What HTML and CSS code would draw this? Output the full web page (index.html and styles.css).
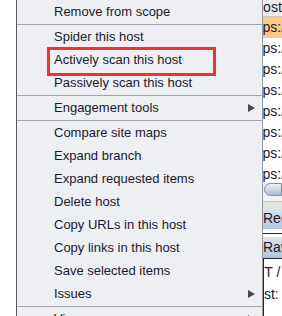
FILE: index.html
```html
<!DOCTYPE html>
<html lang="en">
<head>
    <meta charset="UTF-8">
    <meta name="viewport" content="width=device-width, initial-scale=1.0">
    <title>Site map context menu</title>
    <link rel="stylesheet" href="styles.css">
</head>
<body>
<div class="screen">
    <div class="gutter"></div>

    <ul class="menu">
        <li class="item">Remove from scope</li>
        <li class="sep"></li>
        <li class="item">Spider this host</li>
        <li class="item marked">Actively scan this host</li>
        <li class="item">Passively scan this host</li>
        <li class="sep"></li>
        <li class="item sub">Engagement tools <span class="arrow"></span></li>
        <li class="sep"></li>
        <li class="item">Compare site maps</li>
        <li class="item">Expand branch</li>
        <li class="item">Expand requested items</li>
        <li class="item">Delete host</li>
        <li class="item">Copy URLs in this host</li>
        <li class="item">Copy links in this host</li>
        <li class="item">Save selected items</li>
        <li class="item sub">Issues <span class="arrow"></span></li>
        <li class="sep"></li>
        <li class="item sub">View <span class="arrow"></span></li>
    </ul>

    <div class="side">
        <div class="head"><span class="cut-head">Host</span></div>
        <div class="row selected"><span class="cut-url">https://</span></div>
        <div class="row"><span class="cut-url">https://</span></div>
        <div class="row"><span class="cut-url">https://</span></div>
        <div class="row"><span class="cut-url">https://</span></div>
        <div class="row"><span class="cut-url">https://</span></div>
        <div class="row"><span class="cut-url">https://</span></div>
        <div class="row"><span class="cut-url">https://</span></div>
        <div class="row"><span class="cut-url">https://</span></div>
        <div class="scroll"><div class="thumb"></div></div>
        <div class="track"></div>
        <div class="tab">Req</div>
        <div class="tab-gap"></div>
        <div class="tab">Raw</div>
        <div class="body-text">
            <div><span class="cut-get">GET /</span></div>
            <div><span class="cut-host">Host: www</span></div>
        </div>
    </div>
</div>
</body>
</html>
```

FILE: styles.css
```css
body {
    margin: 0;
    background-color: #ffffff;
    font-family: "Liberation Sans", Arial, sans-serif;
    font-size: 13px;
    color: #1a1a2e;
}

.screen {
    display: flex;
    width: 282px;
    height: 316px;
    overflow: hidden;
}

.gutter {
    width: 16px;
    flex-shrink: 0;
    background-color: #ffffff;
}

/* popup menu */
.menu {
    list-style: none;
    margin: 0;
    padding: 0;
    width: 245px;
    flex-shrink: 0;
    background-color: #eeeff3;
    border-left: 1px solid #5a5a5a;
    border-right: 1px solid #9a9a9a;
}
.item {
    position: relative;
    display: flex;
    align-items: center;
    justify-content: space-between;
    height: 23px;
    line-height: 23px;
    padding: 0 7px 0 37px;
    white-space: nowrap;
}
.sep {
    height: 1px;
    margin-top: 1px;
    background-color: #a3a3ab;
}
.arrow {
    width: 0;
    height: 0;
    border-top: 4px solid transparent;
    border-bottom: 4px solid transparent;
    border-left: 7px solid #474747;
}

/* annotation box drawn over the item */
.marked::after {
    content: "";
    position: absolute;
    left: 30px;
    top: -1px;
    width: 163px;
    height: 23px;
    border: 3px solid #ee3338;
}

/* table behind the menu */
.side {
    flex: 1;
    display: flex;
    flex-direction: column;
    overflow: hidden;
    white-space: nowrap;
    font-size: 14px;
}
.head {
    height: 16px;
    line-height: 15px;
    background-color: #ececef;
    border-bottom: 1px solid #c8c8cc;
}
.row {
    height: 21px;
    line-height: 21px;
    flex-shrink: 0;
}
.selected {
    background-color: #fdca86;
}
.cut-url {
    margin-left: -16px;
}
.cut-head {
    margin-left: -10px;
}
.cut-host {
    margin-left: -18px;
}
.cut-get {
    margin-left: -20px;
}
.scroll {
    height: 13px;
    flex-shrink: 0;
    margin-top: -2px;
    background-color: #ebebeb;
}
.thumb {
    height: 11px;
    margin-left: 1px;
    border: 1px solid #7d8fa3;
    border-radius: 7px 0 0 7px;
    background: linear-gradient(#eef3f8, #a9bccf);
}
.track {
    height: 12px;
    flex-shrink: 0;
    background: linear-gradient(#f2f2f2 0, #f2f2f2 5px, #c8c8c8 5px, #c8c8c8 6px, #e4e4e4 6px);
}
.tab {
    height: 21px;
    line-height: 21px;
    flex-shrink: 0;
    background: linear-gradient(#dbe5ef, #b3c5d8);
}
.tab-gap {
    height: 8px;
    flex-shrink: 0;
    background: linear-gradient(#ffffff 0, #ffffff 4px, #1e2a40 4px, #1e2a40 5px, #ffffff 5px);
}
.body-text {
    flex: 1;
    padding-top: 2px;
    border-top: 1px solid #1e2a40;
    border-left: 1px solid #1e2a40;
    line-height: 22px;
}
```
